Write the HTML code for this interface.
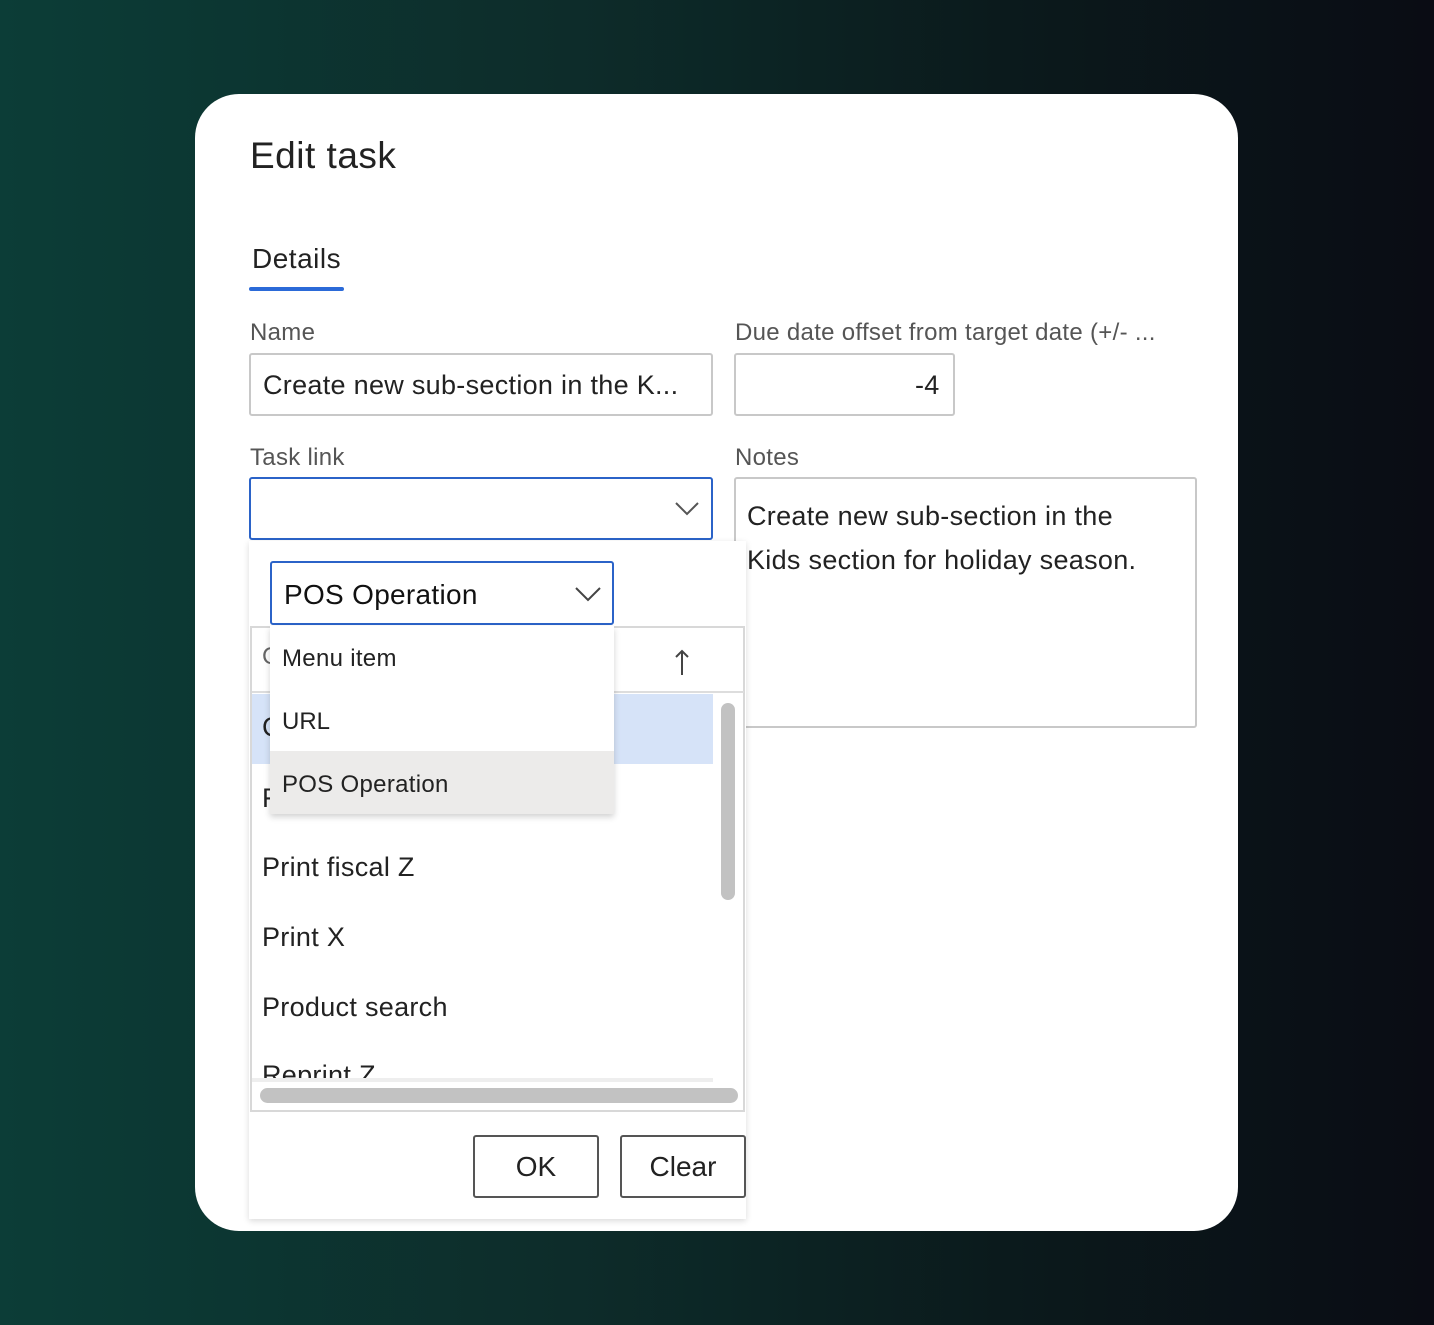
<!DOCTYPE html>
<html><head><style>
*{box-sizing:border-box;margin:0;padding:0}
body{width:1434px;height:1325px;overflow:hidden;background:linear-gradient(90deg,#0c3d37 0%,#0d2c2a 40%,#0b1a1c 70%,#0a0c14 100%);font-family:"Liberation Sans",sans-serif;position:relative;color:#222}
.a{position:absolute}
.card{left:195px;top:94px;width:1043px;height:1137px;background:#fff;border-radius:44px}
.lbl{font-size:24px;color:#555;letter-spacing:0.3px}
.box{border:2px solid #c8c8c8;border-radius:3px;background:#fff}
.t26{font-size:27px;color:#222;letter-spacing:0.3px}
</style></head><body>
<div class="a card"></div>
<div class="a" style="left:250px;top:135px;font-size:37px;color:#222;letter-spacing:0.5px">Edit task</div>
<div class="a" style="left:252px;top:243px;font-size:28px;color:#222;letter-spacing:0.5px">Details</div>
<div class="a" style="left:249px;top:287px;width:95px;height:4px;background:#2b6ad8;border-radius:2px"></div>
<div class="a lbl" style="left:250px;top:319px">Name</div>
<div class="a lbl" style="left:735px;top:319px">Due date offset from target date (+/- ...</div>
<div class="a box" style="left:249px;top:353px;width:464px;height:63px"></div>
<div class="a t26" style="left:263px;top:370px">Create new sub-section in the K...</div>
<div class="a box" style="left:734px;top:353px;width:221px;height:63px"></div>
<div class="a t26" style="left:915px;top:370px">-4</div>
<div class="a lbl" style="left:250px;top:444px">Task link</div>
<div class="a lbl" style="left:735px;top:444px">Notes</div>
<div class="a" style="left:249px;top:477px;width:464px;height:63px;border:2px solid #2b63c8;border-radius:3px;background:#fff"></div>
<svg class="a" style="left:674px;top:500px" width="26" height="16"><path d="M2 3 L13 14 L24 3" fill="none" stroke="#555" stroke-width="2"/></svg>
<div class="a box" style="left:734px;top:477px;width:463px;height:251px"></div>
<div class="a t26" style="left:747px;top:494px;line-height:44px">Create new sub-section in the<br>Kids section for holiday season.</div>
<div class="a" style="left:249px;top:541px;width:497px;height:678px;background:#fff;box-shadow:0 2px 6px rgba(0,0,0,.15)"></div>
<div class="a" style="left:250px;top:626px;width:495px;height:486px;border:2px solid #d8d8d8;background:#fff"></div>
<div class="a" style="left:252px;top:691px;width:492px;height:2px;background:#ddd"></div>
<div class="a" style="left:252px;top:694px;width:461px;height:70px;background:#d6e3f8"></div>
<svg class="a" style="left:674px;top:648px" width="16" height="28"><path d="M8 27 V3 M2 9 L8 3 L14 9" fill="none" stroke="#444" stroke-width="2"/></svg>
<div class="a" style="left:721px;top:703px;width:14px;height:197px;background:#c2c2c2;border-radius:7px"></div>
<div class="a t26" style="left:262px;top:852px">Print fiscal Z</div>
<div class="a t26" style="left:262px;top:922px">Print X</div>
<div class="a t26" style="left:262px;top:992px">Product search</div>
<div class="a" style="left:252px;top:1060px;width:461px;height:18px;overflow:hidden"><div class="t26" style="margin-left:10px">Reprint Z</div></div>
<div class="a" style="left:252px;top:1078px;width:461px;height:4px;background:#eee"></div>
<div class="a" style="left:260px;top:1088px;width:478px;height:15px;background:#c2c2c2;border-radius:8px"></div>
<div class="a t26" style="left:262px;top:643px;color:#666;font-size:24px">C</div>
<div class="a t26" style="left:262px;top:712px">C</div>
<div class="a t26" style="left:262px;top:783px">F</div>
<div class="a" style="left:473px;top:1135px;width:126px;height:63px;border:2px solid #555;border-radius:3px;font-size:28px;text-align:center;line-height:59px">OK</div>
<div class="a" style="left:620px;top:1135px;width:126px;height:63px;border:2px solid #555;border-radius:3px;font-size:28px;text-align:center;line-height:59px">Clear</div>
<div class="a" style="left:270px;top:561px;width:344px;height:64px;border:2px solid #2b63c8;border-radius:3px;background:#fff"></div>
<div class="a" style="left:284px;top:579px;font-size:28px;color:#111;letter-spacing:0.3px">POS Operation</div>
<svg class="a" style="left:574px;top:585px" width="28" height="18"><path d="M2 3 L14 15 L26 3" fill="none" stroke="#444" stroke-width="2"/></svg>
<div class="a" style="left:270px;top:626px;width:344px;height:188px;background:#fff;box-shadow:0 3px 6px rgba(0,0,0,.18)"></div>
<div class="a" style="left:270px;top:751px;width:344px;height:63px;background:#ecebea"></div>
<div class="a" style="left:282px;top:645px;font-size:24px;color:#222;letter-spacing:0.3px">Menu item</div>
<div class="a" style="left:282px;top:708px;font-size:24px;color:#222">URL</div>
<div class="a" style="left:282px;top:771px;font-size:24px;color:#222;letter-spacing:0.3px">POS Operation</div>
</body></html>
